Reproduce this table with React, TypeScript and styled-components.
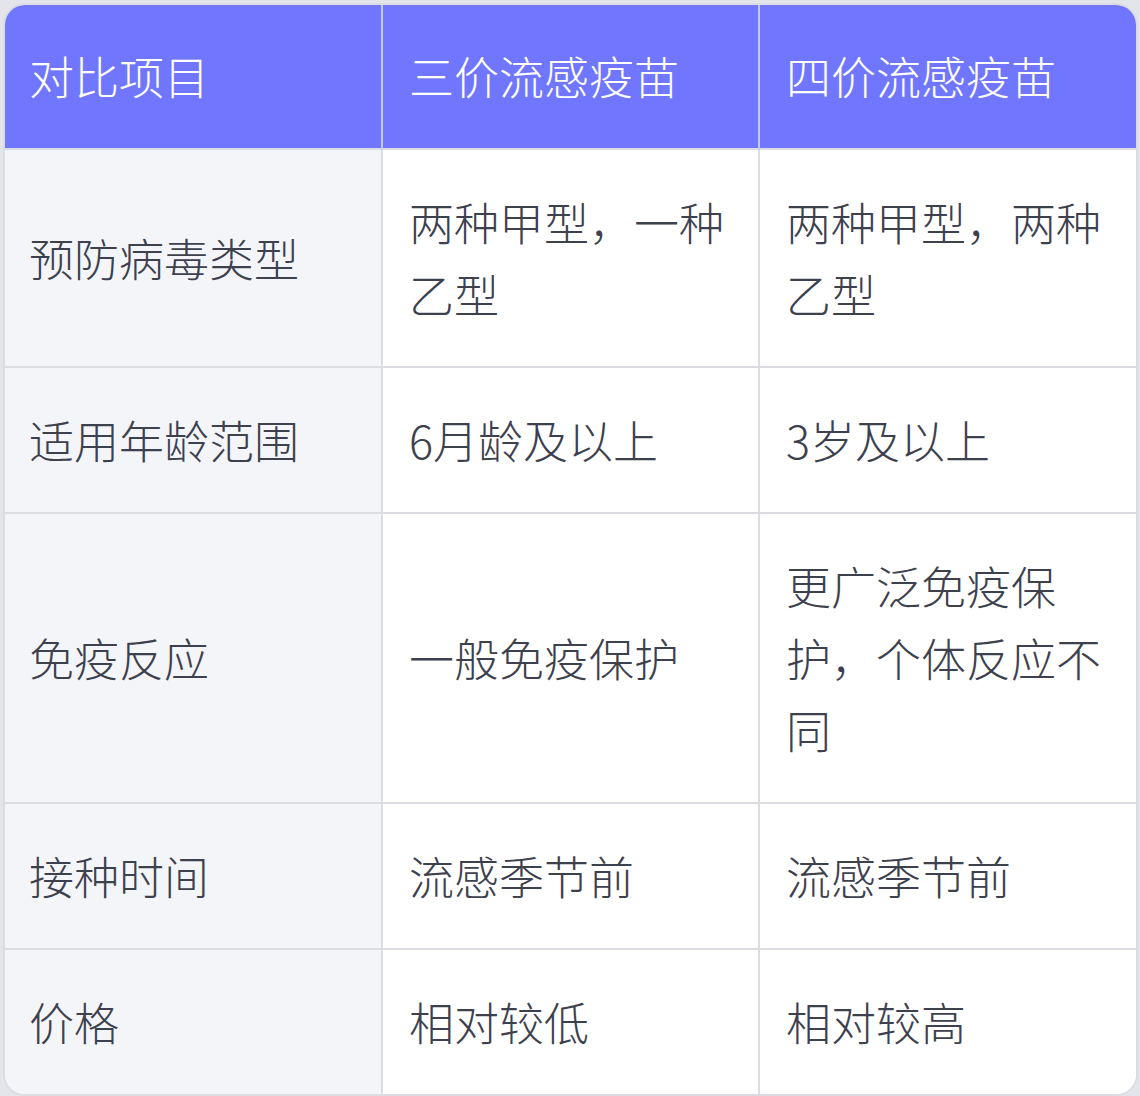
import React from 'react';
import styled, { createGlobalStyle } from 'styled-components';

const GlobalStyle = createGlobalStyle`
  html, body {
    margin: 0;
    padding: 0;
    background: #e4e5ea;
  }
  body {
    font-family: "Noto Sans CJK SC", "Noto Sans", sans-serif;
  }
`;

const Page = styled.div`
  padding: 3px 2px 2px 3px;
  width: 1140px;
  box-sizing: border-box;
`;

const TableWrap = styled.div`
  border: 2px solid #dcdde3;
  border-radius: 22px;
  overflow: hidden;
  background: #ffffff;
`;

const Table = styled.table`
  width: 100%;
  border-collapse: collapse;
  table-layout: fixed;
  font-size: 45px;
  font-weight: 300;
  line-height: 72px;
`;

const HeadCell = styled.th`
  background: #7077fe;
  color: #ffffff;
  font-weight: 300;
  text-align: left;
  padding: 35px 18px 36px 26px;
  border-left: 2px solid #c6c9fb;

  &:first-child {
    border-left: none;
    padding-left: 24px;
  }
`;

const Cell = styled.td<{ $label?: boolean }>`
  background: ${(p) => (p.$label ? '#f4f5f9' : '#ffffff')};
  color: #3d404d;
  padding: 36px 18px 36px 26px;
  vertical-align: middle;
  border-top: 2px solid #dcdde3;
  border-left: 2px solid #dcdde3;
  word-break: break-all;

  &:first-child {
    border-left: none;
    padding-left: 24px;
  }
`;

const rows: [string, string, string][] = [
  ['预防病毒类型', '两种甲型，一种乙型', '两种甲型，两种乙型'],
  ['适用年龄范围', '6月龄及以上', '3岁及以上'],
  ['免疫反应', '一般免疫保护', '更广泛免疫保护，个体反应不同'],
  ['接种时间', '流感季节前', '流感季节前'],
  ['价格', '相对较低', '相对较高'],
];

const App: React.FC = () => {
  return (
    <Page>
      <GlobalStyle />
      <TableWrap>
        <Table>
          <thead>
            <tr>
              <HeadCell>对比项目</HeadCell>
              <HeadCell>三价流感疫苗</HeadCell>
              <HeadCell>四价流感疫苗</HeadCell>
            </tr>
          </thead>
          <tbody>
            {rows.map((r) => (
              <tr key={r[0]}>
                <Cell $label>{r[0]}</Cell>
                <Cell>{r[1]}</Cell>
                <Cell>{r[2]}</Cell>
              </tr>
            ))}
          </tbody>
        </Table>
      </TableWrap>
    </Page>
  );
};

export default App;
